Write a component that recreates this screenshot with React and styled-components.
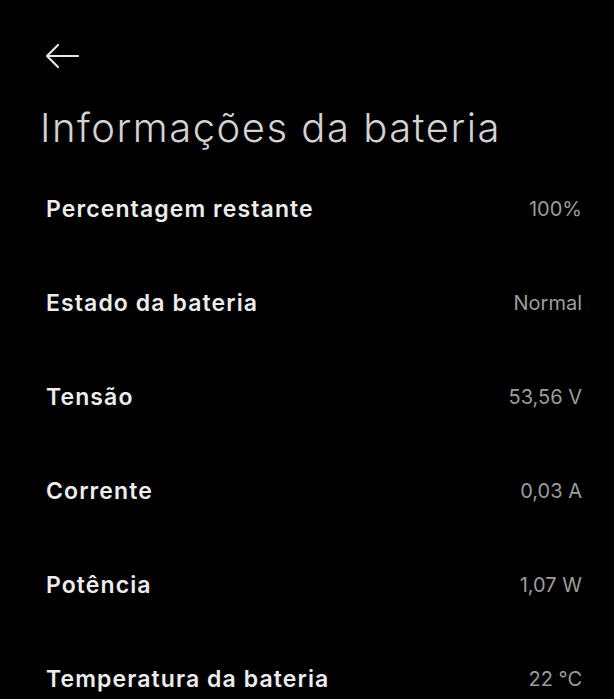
import React from 'react';
import styled, { createGlobalStyle } from 'styled-components';

const GlobalStyle = createGlobalStyle`
  html, body {
    margin: 0;
    padding: 0;
    background: #000;
  }
  body {
    font-family: Inter, "Noto Sans", sans-serif;
  }
`

const Page = styled.div`
  width: 614px;
  height: 699px;
  overflow: hidden;
  background: #000;
  box-sizing: border-box;
  padding: 40px 32px 0 40px;
`

const BackButton = styled.button`
  display: flex;
  align-items: center;
  background: none;
  border: none;
  padding: 0;
  margin-left: 4px;
  width: 36px;
  height: 32px;
  color: #e6e6e6;
  cursor: pointer;
`

const Title = styled.h1`
  margin: 32px 0 0;
  font-size: 40px;
  font-weight: 300;
  color: #d2d2d2;
  letter-spacing: 1.5px;
  line-height: 48px;
`

const List = styled.div`
  display: flex;
  flex-direction: column;
  margin-top: 10px;
  padding-left: 6px;
`

const Row = styled.div`
  display: flex;
  align-items: center;
  justify-content: space-between;
  height: 94px;
`

const Label = styled.span`
  font-size: 23px;
  font-weight: 600;
  color: #ececec;
  letter-spacing: 1.1px;
`

const Value = styled.span`
  font-size: 20px;
  font-weight: 400;
  color: #9c9c9c;
`

const items = [
  ['Percentagem restante', '100%'],
  ['Estado da bateria', 'Normal'],
  ['Tensão', '53,56 V'],
  ['Corrente', '0,03 A'],
  ['Potência', '1,07 W'],
  ['Temperatura da bateria', '22 °C'],
];

export default function App() {
  return (
    <Page>
      <GlobalStyle />
      <BackButton type="button" aria-label="Voltar">
        <svg width="36" height="26" viewBox="0 0 36 26" fill="none">
          <path d="M34 13H3M14 2L3 13l11 11" stroke="currentColor" strokeWidth="2.2" strokeLinecap="round" strokeLinejoin="round" />
        </svg>
      </BackButton>
      <Title>Informações da bateria</Title>
      <List>
        {items.map(([label, value]) => (
          <Row key={label}>
            <Label>{label}</Label>
            <Value>{value}</Value>
          </Row>
        ))}
      </List>
    </Page>
  );
}
